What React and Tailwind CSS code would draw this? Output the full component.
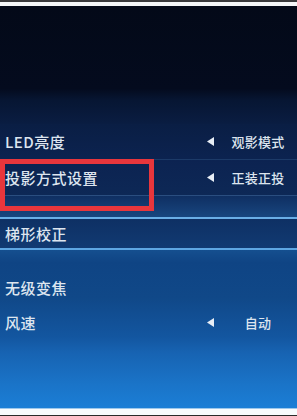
import React from "react";

function Arrow() {
  return (
    <svg width="7" height="9" viewBox="0 0 7 9" className="block">
      <path d="M0 4.5 L7 0 L7 9 Z" fill="#e8eef6" />
    </svg>
  );
}

function Row({ label, value, className }) {
  return (
    <div className={"flex items-center justify-between pl-[5px] pr-[6px] " + className}>
      <span className="text-[15px] tracking-[0.5px] font-medium text-[#dde5ef] leading-none">{label}</span>
      {value && (
        <div className="flex items-center">
          <Arrow />
          <span className="ml-[11px] w-[66px] text-center text-[13px] tracking-[0.3px] font-medium text-[#dde5ef] leading-none">
            {value}
          </span>
        </div>
      )}
    </div>
  );
}

export default function App() {
  return (
    <div
      className="w-[297px] h-[416px] flex flex-col overflow-hidden bg-[#030918]"
      style={{ fontFamily: '"Noto Sans CJK SC", "Noto Sans", sans-serif' }}
    >
      <div className="h-[2px] bg-[#3a3a3c]" />
      <div className="h-[4px] bg-[#f4f6f8]" />
      <div className="flex-1 flex flex-col">
        <div className="h-[118px] bg-[linear-gradient(to_bottom,#030918_0%,#040b1e_70%,#071633_80%,#0a1d42_100%)]" />
        <Row
          label="LED亮度"
          value="观影模式"
          className="h-[36px] bg-[linear-gradient(to_bottom,#0a1e44,#0c2350)] border-b border-[#1c3a68]"
        />
        <div className="relative">
          <Row
            label="投影方式设置"
            value="正装正投"
            className="h-[36px] bg-[linear-gradient(to_bottom,#0c2351,#0d2856)] border-b border-[#2a4e80]"
          />
          <div className="h-[21px] bg-[linear-gradient(to_bottom,#0f2f62,#18467f)]" />
          <div className="absolute left-0 top-[-1px] w-[154px] h-[52px] border-[5px] border-[#e8363c]" />
        </div>
        <div className="h-[2px] bg-[#6aaee6]" />
        <Row
          label="梯形校正"
          className="h-[29px] bg-[linear-gradient(to_bottom,#0e3064,#113a72)]"
        />
        <div className="h-[2px] bg-[#5ea6e2]" />
        <div className="flex-1 flex flex-col bg-[linear-gradient(to_bottom,#154f8f_0%,#0f4484_8%,#104888_30%,#1356a0_55%,#1763b2_65%,#1a74c8_85%,#1b7ed6_100%)]">
          <div className="h-[20px]" />
          <Row label="无级变焦" className="h-[34px]" />
          <Row label="风速" value="自动" className="h-[37px]" />
        </div>
      </div>
      <div className="h-[1px] bg-[#9cc8ec]" />
      <div className="h-[6px] bg-[#f8fbfd]" />
      <div className="h-[1px] bg-[#2a2a2a]" />
    </div>
  );
}
